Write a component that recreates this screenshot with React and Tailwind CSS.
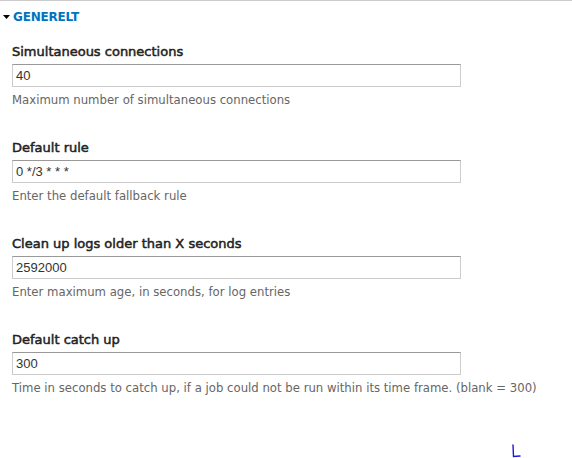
import React from 'react';

const fields = [
  { label: 'Simultaneous connections', value: '40', desc: 'Maximum number of simultaneous connections' },
  { label: 'Default rule', value: '0 */3 * * *', desc: 'Enter the default fallback rule' },
  { label: 'Clean up logs older than X seconds', value: '2592000', desc: 'Enter maximum age, in seconds, for log entries' },
  { label: 'Default catch up', value: '300', desc: 'Time in seconds to catch up, if a job could not be run within its time frame. (blank = 300)' },
];

export default function App() {
  return (
    <div className="relative w-[572px] h-[458px] bg-white border-t border-[#cccccc] font-['DejaVu_Sans',sans-serif] overflow-hidden">
      {/* fieldset legend */}
      <div className="flex items-center h-[32px] pl-[3px]">
        <svg width="7" height="4" viewBox="0 0 7 4" className="mr-[3px]">
          <path d="M0 0 L7 0 L3.5 4 Z" fill="#000" />
        </svg>
        <span className="text-[12px] font-bold text-[#0074bd] uppercase tracking-[-0.2px]">Generelt</span>
      </div>

      <div className="pl-[12px] pt-[10px]">
        {fields.map((f) => (
          <div key={f.label} className="mb-[31px]">
            <label className="block text-[13px] text-[#222] leading-[18px] mb-[3px] [-webkit-text-stroke:0.5px_#222]">{f.label}</label>
            <input
              readOnly
              value={f.value}
              className="block w-[449px] h-[23px] px-[3px] border border-[#cccccc] border-t-[#999999] text-[13px] text-[#333] font-['Liberation_Sans',Arial,sans-serif] outline-none"
            />
            <div className="text-[11.7px] text-[#666] leading-[16px] mt-[5px]">{f.desc}</div>
          </div>
        ))}
      </div>

      <svg className="absolute left-[511px] top-[443px]" width="12" height="15" viewBox="0 0 12 15">
        <path d="M2 1 L2.5 12.5 L9 12" stroke="#1a1adf" strokeWidth="1.4" fill="none" strokeLinecap="round" />
      </svg>
    </div>
  );
}
